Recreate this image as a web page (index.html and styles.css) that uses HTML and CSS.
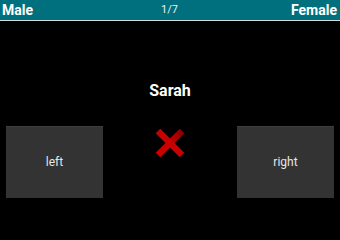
FILE: index.html
```html
<!DOCTYPE html>
<html>
<head>
<meta charset="utf-8">
<link rel="stylesheet" href="styles.css">
</head>
<body>
<div class="header">
  <span class="side">Male</span>
  <span class="count">1/7</span>
  <span class="side">Female</span>
</div>
<div class="name">Sarah</div>
<div class="row">
  <div class="btn">left</div>
  <svg class="mark" width="30" height="30" viewBox="0 0 30 30">
    <defs>
      <linearGradient id="g" x1="0" y1="1" x2="1" y2="0">
        <stop offset="0.5" stop-color="#c80000"/>
        <stop offset="1" stop-color="#8c0000"/>
      </linearGradient>
    </defs>
    <line x1="3" y1="27" x2="27" y2="3" stroke="url(#g)" stroke-width="6.5"/>
    <line x1="3" y1="3" x2="27" y2="27" stroke="#c80000" stroke-width="6.5"/>
  </svg>
  <div class="btn">right</div>
</div>
</body>
</html>
```
FILE: styles.css
```css
html, body {
  margin: 0;
  padding: 0;
  background: #000;
}
body {
  width: 340px;
  height: 204px;
  overflow: hidden;
  font-family: Roboto, "Liberation Sans", sans-serif;
  color: #fff;
}
.header {
  height: 20px;
  background: #00707e;
  border-bottom: 1px solid #d4dcdc;
  display: flex;
  justify-content: space-between;
  align-items: center;
  padding: 0 3px 0 2px;
}
.side {
  font-weight: bold;
  font-size: 14px;
  line-height: 20px;
  width: 60px;
}
.side:last-child {
  text-align: right;
}
.count {
  font-size: 11px;
  line-height: 20px;
  color: #e8f0f0;
}
.name {
  margin-top: 60px;
  text-align: center;
  font-weight: bold;
  font-size: 16px;
  line-height: 20px;
}
.row {
  margin-top: 25px;
  display: flex;
  justify-content: space-between;
  align-items: flex-start;
  padding: 0 6px;
}
.btn {
  width: 97px;
  height: 72px;
  background: #333;
  box-shadow: inset 0 1px 0 #3e3e3e;
  display: flex;
  align-items: center;
  justify-content: center;
  font-size: 12px;
  color: #e6e6e6;
}
.mark {
  margin-top: 2px;
  display: block;
}
```
